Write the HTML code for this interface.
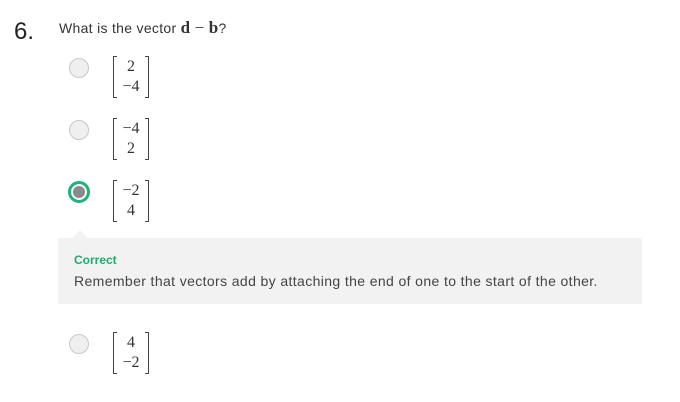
<html><head><style>
body{margin:0;width:680px;height:402px;background:#fff;position:relative;font-family:"Liberation Sans",sans-serif;overflow:hidden}
.a{position:absolute}
.r{position:absolute;width:20px;height:20px;border-radius:50%;background:#efefef;border:1px solid #c8c8c8;box-sizing:border-box}
.m{position:absolute;width:36px;height:42px;font-family:"Liberation Serif",serif;font-size:16px;color:#333}
.m .l,.m .rr{position:absolute;top:0;width:4px;height:42px;border:1px solid #444;box-sizing:border-box}
.m .l{left:0;border-right:none}
.m .rr{right:0;border-left:none}
.m .t,.m .b{position:absolute;left:3px;right:3px;text-align:center;line-height:17px}
.m .t{top:2px}.m .b{top:22px}
</style></head><body>
<div class="a" style="left:14px;top:18px;font-size:24px;color:#222">6.</div>
<div class="a" style="left:59px;top:18px;font-size:14px;color:#333;letter-spacing:0.3px">What is the vector <b style="font-family:'Liberation Serif',serif;font-size:17px">d</b> <span style="font-family:'Liberation Serif',serif;font-size:17px">−</span> <b style="font-family:'Liberation Serif',serif;font-size:17px">b</b>?</div>

<div class="r" style="left:69px;top:58px"></div>
<div class="m" style="left:113px;top:56px"><div class="l"></div><div class="rr"></div><div class="t">2</div><div class="b">−4</div></div>

<div class="r" style="left:69px;top:120px"></div>
<div class="m" style="left:113px;top:118px"><div class="l"></div><div class="rr"></div><div class="t">−4</div><div class="b">2</div></div>

<div class="r" style="left:68px;top:181px;width:22px;height:22px;border:3px solid #1fb37a;background:#fff"><div style="position:absolute;left:2px;top:2px;width:12px;height:12px;border-radius:50%;background:#8a8a8a"></div></div>
<div class="m" style="left:113px;top:180px"><div class="l"></div><div class="rr"></div><div class="t">−2</div><div class="b">4</div></div>

<div class="a" style="left:58px;top:238px;width:584px;height:66px;background:#f2f2f2"></div>
<div class="a" style="left:72px;top:230px;width:0;height:0;border-left:8px solid transparent;border-right:8px solid transparent;border-bottom:8px solid #f2f2f2"></div>
<div class="a" style="left:74px;top:253px;font-size:12px;font-weight:bold;color:#1fab6e">Correct</div>
<div class="a" style="left:74px;top:273px;font-size:14px;color:#444;letter-spacing:0.38px">Remember that vectors add by attaching the end of one to the start of the other.</div>

<div class="r" style="left:69px;top:334px"></div>
<div class="m" style="left:113px;top:332px"><div class="l"></div><div class="rr"></div><div class="t">4</div><div class="b">−2</div></div>
</body></html>
